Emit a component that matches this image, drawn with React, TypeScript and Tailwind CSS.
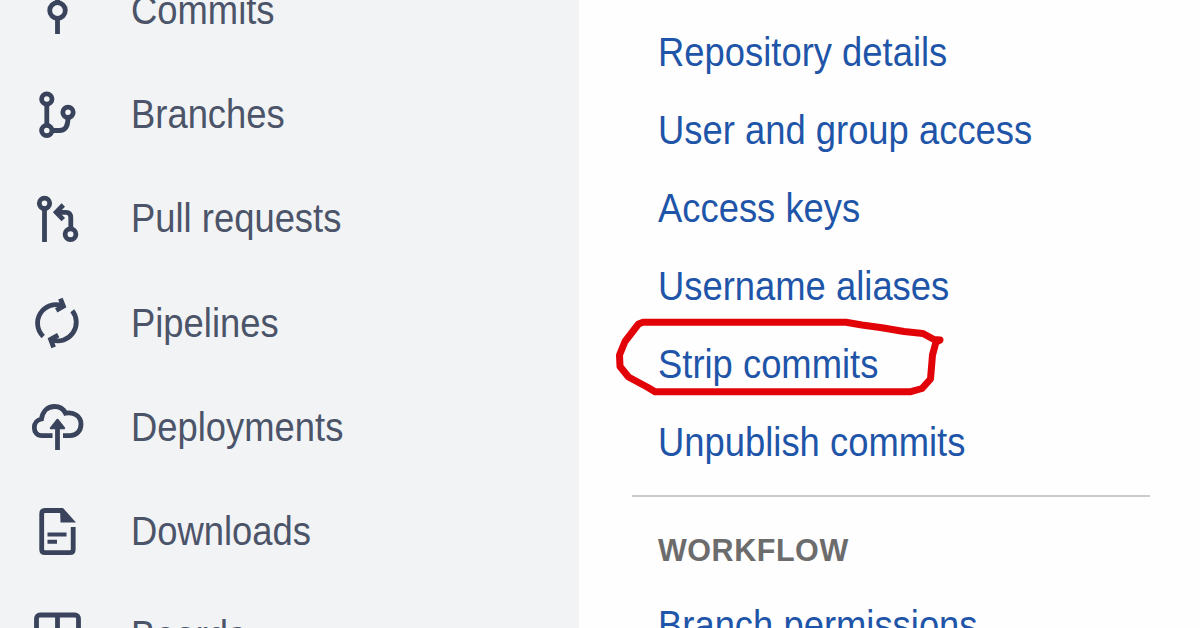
import React from 'react';

interface NavItem {
  label: string;
  icon: React.ReactNode;
}

interface SettingsLink {
  label: string;
  marked?: boolean;
}

// All sidebar icons share a 60x60 box with the origin in its centre
const Icon: React.FC<{ children: React.ReactNode }> = ({ children }) => (
  <svg
    viewBox="-30 -30 60 60"
    className="h-[60px] w-[60px] shrink-0 text-[#3a435c]"
    fill="none"
    stroke="currentColor"
    strokeWidth="4.8"
  >
    {children}
  </svg>
);

const NAV_ITEMS: NavItem[] = [
  {
    label: 'Commits',
    icon: (
      <Icon>
        <circle cx="0.5" cy="-0.5" r="7.8" />
        <path d="M0.5 -23V-9M0.5 8V23" />
      </Icon>
    ),
  },
  {
    label: 'Branches',
    icon: (
      <Icon>
        <circle cx="-10.2" cy="-16" r="5.2" />
        <circle cx="-10.2" cy="15.5" r="5.2" />
        <circle cx="11" cy="-2.7" r="5.2" />
        <path d="M-10.2 -11V10.5M-5 15.5H2.5Q11 15.5 11 3" />
      </Icon>
    ),
  },
  {
    label: 'Pull requests',
    icon: (
      <Icon>
        <circle cx="-12.5" cy="-15.7" r="5.2" />
        <circle cx="13.5" cy="15.3" r="5.4" />
        <path d="M-12.5 -10.5V23M0 -6.7H9Q13.8 -6.7 13.8 -1V10" />
        <path d="M6.3 -14L-0.8 -6.7L6.3 0.6" />
      </Icon>
    ),
  },
  {
    label: 'Pipelines',
    icon: (
      <Icon>
        <path d="M-13.8 13.5A18.6 18.6 0 0 1 5 -17.5" />
        <path d="M3.4 -24.3L6.4 -16.7L-0.8 -12.6" />
        <path d="M15.3 -12.2A18.6 18.6 0 0 1 -5 17" />
        <path d="M-3.4 24.3L-6.4 16.4L1.2 12.1" />
      </Icon>
    ),
  },
  {
    label: 'Deployments',
    icon: (
      <Icon>
        <path d="M-4.5 8.7H-15C-20 8.7 -22.7 5 -22.7 0.5C-22.7 -4 -19.5 -7.3 -15.5 -8C-14.5 -15.5 -9.5 -20.5 -2.5 -20.5C2.5 -20.5 6.5 -18 8.5 -13.8C17 -15.5 24 -10.5 24 -3C24 4 19.5 8.7 13 8.7H6" />
        <path d="M0.5 -1V23" />
        <path d="M0.5 -7.3L7.2 1.2H-6.2Z" fill="currentColor" strokeWidth="2" strokeLinejoin="round" />
      </Icon>
    ),
  },
  {
    label: 'Downloads',
    icon: (
      <Icon>
        <path d="M5 -21.5H-12Q-15.3 -21.5 -15.3 -18V17.5Q-15.3 20.7 -12 20.7H13Q16.2 20.7 16.2 17.5V-5" />
        <path d="M3 -23.9H6L19 -9.5H3.5Z" fill="currentColor" stroke="none" />
        <path d="M-9.5 2.5H9.5M-9.5 9.7H0" strokeWidth="4" />
      </Icon>
    ),
  },
  {
    label: 'Boards',
    icon: (
      <Icon>
        <rect x="-20.5" y="-21" width="42" height="42" rx="3.5" />
        <path d="M0.5 -21V21" />
      </Icon>
    ),
  },
];

const LINKS: SettingsLink[] = [
  { label: 'Repository details' },
  { label: 'User and group access' },
  { label: 'Access keys' },
  { label: 'Username aliases' },
  { label: 'Strip commits', marked: true },
  { label: 'Unpublish commits' },
];

// Hand drawn ring around a link
const Marker: React.FC = () => (
  <svg
    viewBox="610 312 340 90"
    className="pointer-events-none absolute -left-[48px] -top-[21px] h-[90px] w-[340px]"
    fill="none"
    stroke="#e20308"
    strokeWidth="7"
    strokeLinejoin="round"
    strokeLinecap="square"
  >
    <path d="M643 322.3H846L862 325L882 327.7L904 331.5L923 333.5L934 339.5L940 340L936 342L932.5 355L930.5 379L922 388.5L910 391.8H655L648 387.5L628.5 377L620 366.5L619.5 355L625 341.5L638.5 324Z" />
  </svg>
);

const App: React.FC = () => {
  return (
    <div className="flex h-[628px] w-[1200px] overflow-hidden bg-[#fefefe] font-['Liberation_Sans',Arial,sans-serif] text-[36.4px] leading-[37px]">
      <nav className="w-[579px] shrink-0 bg-[#f2f3f5]">
        <ul className="-mt-[41.5px]">
          {NAV_ITEMS.map((item) => (
            <li key={item.label} className="flex h-[104.2px] items-center gap-11 pl-[27px]">
              {item.icon}
              <span className="block -translate-y-px scale-y-[1.12] whitespace-nowrap text-[#4b5468]">{item.label}</span>
            </li>
          ))}
        </ul>
      </nav>

      <main className="flex-1 pl-[53px] pt-[13px]">
        <ul>
          {LINKS.map((link) => (
            <li key={link.label} className="flex h-[78.1px] items-center pl-[26px]">
              <div className="relative flex h-[63px] items-center">
                <a className="block -translate-y-px scale-y-[1.12] whitespace-nowrap text-[#1f55a8]">{link.label}</a>
                {link.marked && <Marker />}
              </div>
            </li>
          ))}
        </ul>
        <hr className="mt-[13px] w-[518px] border-t-2 border-[#cbcbcb]" />
        <h2 className="mt-[38px] pl-[26px] text-[30.5px] leading-[30px] font-bold tracking-[0.55px] text-[#6c6c6c]">WORKFLOW</h2>
        <div className="mt-[41px] pl-[26px]">
          <a className="block w-fit scale-y-[1.12] whitespace-nowrap text-[#1f55a8]">Branch permissions</a>
        </div>
      </main>
    </div>
  );
};

export default App;
